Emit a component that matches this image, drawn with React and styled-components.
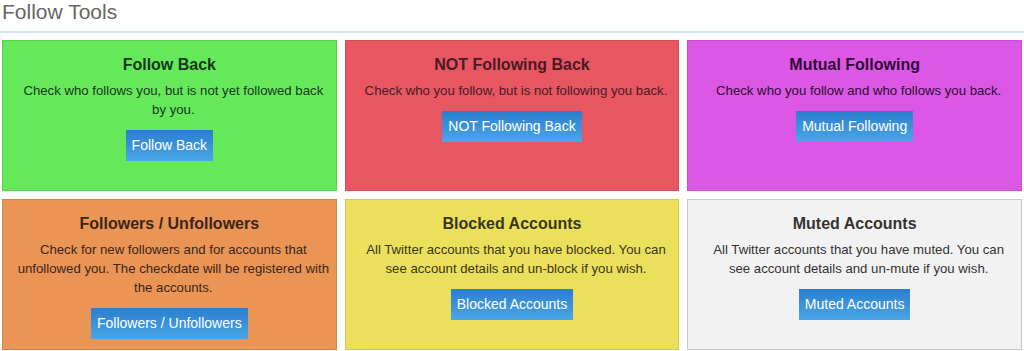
import React from "react";
import styled, { createGlobalStyle } from "styled-components";

const GlobalStyle = createGlobalStyle`
  body {
    margin: 0;
    background: #fff;
    font-family: "Liberation Sans", Arial, sans-serif;
  }
`;

const Page = styled.div`
  width: 1024px;
  height: 351px;
  overflow: hidden;
`;

const Header = styled.h1`
  margin: 0;
  padding: 1px 2px 8px;
  font-size: 21px;
  line-height: 22px;
  font-weight: normal;
  color: #666;
  border-bottom: 2px solid #d3e2ec;
`;

const Grid = styled.div`
  display: grid;
  grid-template-columns: repeat(3, 1fr);
  grid-auto-rows: 151px;
  gap: 8px;
  padding: 7px 2px 0;
`;

const Card = styled.div`
  box-sizing: border-box;
  background: ${(p) => p.bg};
  border: 1px solid ${(p) => p.edge};
  padding: 14px 6px 0;
  display: flex;
  flex-direction: column;
  align-items: center;
  text-align: center;
  color: ${(p) => p.ink};
`;

const Title = styled.h4`
  margin: 0;
  font-size: 16px;
  line-height: 20px;
  font-weight: bold;
`;

const Desc = styled.p`
  margin: 6px 0 0;
  padding-left: 8px;
  font-size: 13.2px;
  line-height: 19px;
`;

const Button = styled.button`
  margin-top: 11px;
  padding: 6px 6px;
  border: none;
  border-radius: 0;
  font-family: inherit;
  font-size: 14px;
  line-height: 19px;
  color: #fff;
  background: linear-gradient(#2b7ecd, #4ba6e7);
  cursor: pointer;
`;

const tools = [
  {
    title: "Follow Back",
    text: "Check who follows you, but is not yet followed back by you.",
    bg: "#65e95b",
    edge: "#5acf52",
    ink: "#17381a",
  },
  {
    title: "NOT Following Back",
    text: "Check who you follow, but is not following you back.",
    bg: "#e85662",
    edge: "#d04d58",
    ink: "#4a1a22",
  },
  {
    title: "Mutual Following",
    text: "Check who you follow and who follows you back.",
    bg: "#dd57e5",
    edge: "#c64ece",
    ink: "#2e0b35",
  },
  {
    title: "Followers / Unfollowers",
    text: "Check for new followers and for accounts that unfollowed you. The checkdate will be registered with the accounts.",
    bg: "#ea9456",
    edge: "#d2854d",
    ink: "#3b2616",
  },
  {
    title: "Blocked Accounts",
    text: "All Twitter accounts that you have blocked. You can see account details and un-block if you wish.",
    bg: "#ebe05c",
    edge: "#d3c952",
    ink: "#3a3616",
  },
  {
    title: "Muted Accounts",
    text: "All Twitter accounts that you have muted. You can see account details and un-mute if you wish.",
    bg: "#f2f2f2",
    edge: "#c8c8c8",
    ink: "#333",
  },
];

function App() {
  return (
    <Page>
      <GlobalStyle />
      <Header>Follow Tools</Header>
      <Grid>
        {tools.map((t) => (
          <Card key={t.title} bg={t.bg} edge={t.edge} ink={t.ink}>
            <Title>{t.title}</Title>
            <Desc>{t.text}</Desc>
            <Button>{t.title}</Button>
          </Card>
        ))}
      </Grid>
    </Page>
  );
}

export default App;
